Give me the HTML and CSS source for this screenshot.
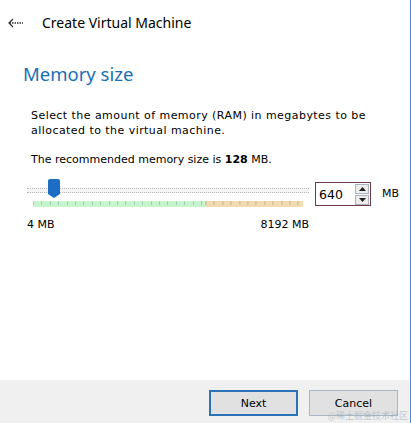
FILE: index.html
```html
<!DOCTYPE html>
<html>
<head>
<meta charset="utf-8">
<link rel="stylesheet" href="styles.css">
</head>
<body>
<div class="window">
  <div class="header">
    <svg class="back" width="16" height="10" viewBox="0 0 16 10">
      <path d="M5 1 L1 5 L5 9" fill="none" stroke="#333" stroke-width="1.3"/>
      <path d="M1.5 5 H15" fill="none" stroke="#333" stroke-width="1.3" stroke-dasharray="1.5 1"/>
    </svg>
    <span class="title">Create Virtual Machine</span>
  </div>
  <div class="content">
    <h1 class="heading">Memory size</h1>
    <p class="desc">Select the amount of memory (RAM) in megabytes to be allocated to the virtual machine.</p>
    <p class="rec">The recommended memory size is <b>128</b> MB.</p>
    <div class="memrow">
      <div class="slider">
        <div class="track">
          <div class="thumb"></div>
        </div>
        <div class="ticks">
          <div class="ok"></div>
          <div class="warn"></div>
        </div>
        <div class="limits"><span>4 MB</span><span>8192 MB</span></div>
      </div>
      <div class="spin">
        <span class="val">640</span>
        <div class="arrows">
          <div class="btn"><svg width="7" height="4" viewBox="0 0 7 4"><path d="M0 4 L3.5 0 L7 4Z" fill="#222"/></svg></div>
          <div class="btn"><svg width="7" height="4" viewBox="0 0 7 4"><path d="M0 0 L3.5 4 L7 0Z" fill="#222"/></svg></div>
        </div>
      </div>
      <span class="unit">MB</span>
    </div>
  </div>
  <div class="footer">
    <button class="button primary">Next</button>
    <button class="button">Cancel</button>
    <span class="watermark">@稀土掘金技术社区</span>
  </div>
</div>
</body>
</html>
```
FILE: styles.css
```css
html, body {
  margin: 0;
  padding: 0;
  background: #ffffff;
}
.window {
  width: 411px;
  height: 423px;
  display: flex;
  flex-direction: column;
  background: #ffffff;
  border-right: 1px solid #4a90d0;
  box-sizing: border-box;
  position: relative;
  font-family: "DejaVu Sans", sans-serif;
  color: #000;
}
.header {
  height: 45px;
  display: flex;
  align-items: center;
  padding-left: 8px;
  box-sizing: border-box;
}
.back {
  margin-right: 18px;
}
.title {
  font-family: "Noto Sans", "Open Sans", sans-serif;
  font-size: 14px;
  color: #000;
}
.content {
  flex: 1;
  padding: 0 0 0 23px;
}
.heading {
  margin: 16px 0 0 0;
  font-family: "Noto Sans", "Open Sans", sans-serif;
  font-weight: normal;
  font-size: 18.5px;
  line-height: 26px;
  color: #1b6fb5;
}
.desc {
  margin: 21px 0 0 8px;
  width: 360px;
  font-size: 11px;
  line-height: 15px;
  letter-spacing: 0.45px;
}
.rec {
  margin: 14px 0 0 8px;
  font-size: 11px;
  line-height: 15px;
}
.memrow {
  display: flex;
  align-items: flex-start;
  margin-top: 11px;
  margin-left: 4px;
}
.slider {
  width: 282px;
  display: flex;
  flex-direction: column;
}
.track {
  position: relative;
  height: 3px;
  margin-top: 10px;
  border-top: 1px dotted #b8b8b8;
  border-bottom: 1px dotted #b8b8b8;
  background: #f4f4f4;
}
.thumb {
  position: absolute;
  left: 21px;
  top: -10px;
  width: 12px;
  height: 15px;
  background: #1e6dc4;
  border-radius: 2px 2px 0 0;
}
.thumb::after {
  content: "";
  position: absolute;
  left: 0;
  top: 15px;
  border-left: 6px solid transparent;
  border-right: 6px solid transparent;
  border-top: 4px solid #1e6dc4;
}
.ticks {
  display: flex;
  height: 6px;
  margin: 8px 6px 0 6px;
}
.ok {
  width: 172px;
  background-color: #c6f4cc;
  background-image: repeating-linear-gradient(90deg, #9fcfb8 0 1px, transparent 1px 8.4px);
  background-size: auto 4px;
  background-repeat: repeat-x;
  background-position: 0 0;
}
.warn {
  flex: 1;
  background-color: #efdcb0;
  background-image: repeating-linear-gradient(90deg, #c9b48c 0 1px, transparent 1px 8.4px);
  background-size: auto 4px;
  background-repeat: repeat-x;
  background-position: 0.4px 0;
}
.limits {
  display: flex;
  justify-content: space-between;
  margin-top: 11px;
  font-size: 11px;
  line-height: 13px;
}
.spin {
  margin-left: 6px;
  margin-top: 4px;
  width: 56px;
  height: 24px;
  box-sizing: border-box;
  border: 1px solid #6e3a48;
  display: flex;
  align-items: center;
  justify-content: space-between;
  padding-left: 3px;
  font-size: 12.5px;
}
.arrows {
  display: flex;
  flex-direction: column;
  gap: 1px;
  margin-right: 1px;
}
.arrows .btn {
  width: 14px;
  height: 10px;
  border: 1px solid #a9b4c0;
  box-sizing: border-box;
  background: #ececec;
  display: flex;
  align-items: center;
  justify-content: center;
}
.unit {
  margin-left: 11px;
  margin-top: 9px;
  font-size: 11px;
}
.footer {
  height: 43px;
  background: #f0f0f0;
  display: flex;
  justify-content: flex-end;
  align-items: flex-start;
  padding: 10px 12px 0 0;
  box-sizing: border-box;
  gap: 11px;
  position: relative;
}
.button {
  width: 89px;
  height: 26px;
  font-family: "DejaVu Sans", sans-serif;
  font-size: 11px;
  color: #000;
  background: #e1e1e1;
  border: 1px solid #a6b8c8;
  padding: 0;
}
.primary {
  border: 2px solid #2a73b7;
}
.watermark {
  position: absolute;
  right: 2px;
  bottom: 1px;
  font-family: "Noto Sans CJK SC", sans-serif;
  font-size: 9px;
  color: rgba(160, 170, 180, 0.6);
}
```
